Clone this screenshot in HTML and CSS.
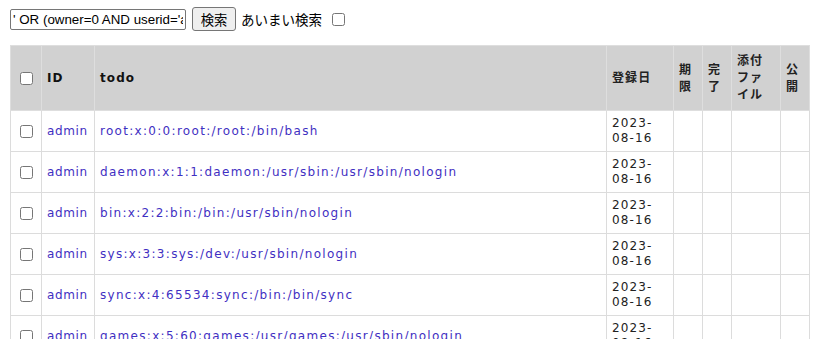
FILE: index.html
```html
<!DOCTYPE html>
<html lang="ja">
<head>
<meta charset="utf-8">
<title>todo</title>
<link rel="stylesheet" href="styles.css">
</head>
<body>
<form class="search">
  <input class="q" type="text" value="' OR (owner=0 AND userid='admin') OR '1'='1">
  <button class="btn" type="button">検索</button>
  <label class="fuzzy">あいまい検索 <input type="checkbox" class="cb"></label>
</form>
<table class="list">
  <colgroup>
    <col class="c-chk"><col class="c-id"><col class="c-todo"><col class="c-date"><col class="c-n"><col class="c-n"><col class="c-file"><col class="c-n">
  </colgroup>
  <thead>
    <tr>
      <th><input type="checkbox" class="cb"></th>
      <th>ID</th>
      <th>todo</th>
      <th class="jp">登録日</th>
      <th class="jp">期限</th>
      <th class="jp">完了</th>
      <th class="jp">添付ファイル</th>
      <th class="jp">公開</th>
    </tr>
  </thead>
  <tbody>
    <tr><td><input type="checkbox" class="cb"></td><td><a class="id" href="#">admin</a></td><td><a class="todo" href="#">root:x:0:0:root:/root:/bin/bash</a></td><td class="date">2023-08-16</td><td></td><td></td><td></td><td></td></tr>
    <tr><td><input type="checkbox" class="cb"></td><td><a class="id" href="#">admin</a></td><td><a class="todo" href="#">daemon:x:1:1:daemon:/usr/sbin:/usr/sbin/nologin</a></td><td class="date">2023-08-16</td><td></td><td></td><td></td><td></td></tr>
    <tr><td><input type="checkbox" class="cb"></td><td><a class="id" href="#">admin</a></td><td><a class="todo" href="#">bin:x:2:2:bin:/bin:/usr/sbin/nologin</a></td><td class="date">2023-08-16</td><td></td><td></td><td></td><td></td></tr>
    <tr><td><input type="checkbox" class="cb"></td><td><a class="id" href="#">admin</a></td><td><a class="todo" href="#">sys:x:3:3:sys:/dev:/usr/sbin/nologin</a></td><td class="date">2023-08-16</td><td></td><td></td><td></td><td></td></tr>
    <tr><td><input type="checkbox" class="cb"></td><td><a class="id" href="#">admin</a></td><td><a class="todo" href="#">sync:x:4:65534:sync:/bin:/bin/sync</a></td><td class="date">2023-08-16</td><td></td><td></td><td></td><td></td></tr>
    <tr><td><input type="checkbox" class="cb"></td><td><a class="id" href="#">admin</a></td><td><a class="todo" href="#">games:x:5:60:games:/usr/games:/usr/sbin/nologin</a></td><td class="date">2023-08-16</td><td></td><td></td><td></td><td></td></tr>
    <tr><td><input type="checkbox" class="cb"></td><td><a class="id" href="#">admin</a></td><td><a class="todo" href="#">man:x:6:12:man:/var/cache/man:/usr/sbin/nologin</a></td><td class="date">2023-08-16</td><td></td><td></td><td></td><td></td></tr>
  </tbody>
</table>
</body>
</html>
```
FILE: styles.css
```css
html, body {
  margin: 0;
  padding: 0;
  background: #fff;
}
body {
  padding: 7px 10px;
  font-family: "DejaVu Sans", Verdana, "Noto Sans CJK JP", sans-serif;
  color: #222;
}
.search {
  display: flex;
  align-items: center;
  height: 24px;
  margin: 0 0 14px;
  font-family: "Liberation Sans", Arial, "Noto Sans CJK JP", sans-serif;
  font-size: 13.33px;
}
.q {
  box-sizing: border-box;
  width: 176px;
  height: 21px;
  margin: 0;
  padding: 1px 2px;
  border: 1px solid #767676;
  border-radius: 2px;
  font: inherit;
  color: #000;
}
.btn {
  box-sizing: border-box;
  height: 24px;
  width: 44px;
  margin: 0 0 0 6px;
  padding: 0 6px;
  border: 1px solid #767676;
  border-radius: 3px;
  background: #efefef;
  font-family: "Noto Sans CJK JP", sans-serif;
  font-size: 13.33px;
  color: #000;
}
.fuzzy {
  display: flex;
  align-items: center;
  margin-left: 5px;
  font-family: "Noto Sans CJK JP", sans-serif;
  font-size: 13.5px;
  color: #000;
}
.fuzzy .cb {
  margin: 0 0 0 10px;
}
.cb {
  width: 13px;
  height: 13px;
  margin: 3px 3px 3px 4px;
  vertical-align: middle;
}
.list {
  width: 800px;
  table-layout: fixed;
  border-collapse: collapse;
  font-size: 12px;
  letter-spacing: 1.1px;
}
.c-chk { width: 31px; }
.c-id { width: 53px; }
.c-date { width: 67px; }
.c-n { width: 29px; }
.c-file { width: 49px; }
.list th,
.list td {
  border: 1px solid #dcdcdc;
  padding: 5px 5px;
  text-align: left;
  vertical-align: middle;
  line-height: 15px;
  word-break: normal;
}
.list th {
  background: #d1d1d1;
  border-color: #dedede;
  font-weight: bold;
  line-height: 17px;
  padding: 7px 5px 6px;
  color: #111;
}
.list th.jp {
  color: #222;
}
.list td {
  height: 30px;
}
.list a {
  color: #3f2fc2;
  text-decoration: none;
}
.list a.id {
  letter-spacing: 0.6px;
}
.list a.todo {
  letter-spacing: 1.3px;
}
.date {
  color: #222;
}
```
